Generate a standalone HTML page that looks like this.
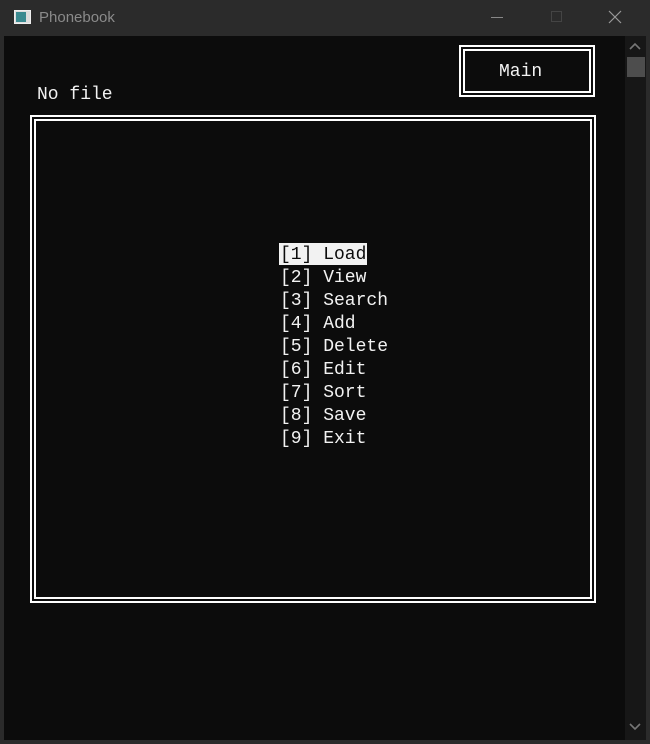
<!DOCTYPE html>
<html><head><meta charset="utf-8"><style>
*{margin:0;padding:0;box-sizing:border-box}
body{width:650px;height:744px;background:#2b2b2b;position:relative;overflow:hidden;font-family:"Liberation Mono",monospace}
.a{position:absolute}
.title{left:0;top:0;width:650px;height:36px;background:#2b2b2b}
.content{left:4px;top:36px;width:621px;height:704px;background:#0c0c0c}
.sb{left:625px;top:36px;width:21px;height:704px;background:#171717}
.thumb{left:627px;top:57px;width:18px;height:20px;background:#4d4d4d}
.edge{left:646px;top:36px;width:4px;height:708px;background:#2b2b2b}
.t{color:#f2f2f2;font-size:18px;line-height:23px;white-space:pre}
.b{border:2px solid #fff}
.b2{border:2px solid #fff}
</style></head><body>
<div class="a title"></div>
<div class="a" style="left:14px;top:10px;width:17px;height:14px;background:#ddd;border:1px solid #eee"><div style="position:absolute;left:1px;top:1px;width:10px;height:10px;background:#3a8a90"></div></div>
<div class="a" style="left:39px;top:9px;font-family:'Liberation Sans',sans-serif;font-size:15px;color:#8a8a8a">Phonebook</div>
<div class="a" style="left:491px;top:17px;width:12px;height:1px;background:#888"></div>
<div class="a" style="left:551px;top:11px;width:11px;height:11px;border:1px solid #444"></div>
<svg class="a" style="left:608px;top:10px" width="14" height="14"><path d="M1 1L13 13M13 1L1 13" stroke="#999" stroke-width="1.2"/></svg>
<div class="a content"></div>
<div class="a sb"></div>
<div class="a thumb"></div>
<svg class="a" style="left:628px;top:42px" width="14" height="10"><path d="M2 7L7 2L12 7" stroke="#777" stroke-width="1.6" fill="none"/></svg>
<svg class="a" style="left:628px;top:722px" width="14" height="10"><path d="M2 2L7 7L12 2" stroke="#777" stroke-width="1.6" fill="none"/></svg>
<div class="a edge"></div>

<div class="a b" style="left:459px;top:45px;width:136px;height:52px"></div>
<div class="a b2" style="left:463px;top:49px;width:128px;height:44px"></div>
<div class="a t" style="left:499px;top:61px">Main</div>
<div class="a t" style="left:37px;top:84px">No file</div>

<div class="a b" style="left:30px;top:115px;width:566px;height:488px"></div>
<div class="a b2" style="left:34px;top:119px;width:558px;height:480px"></div>

<div class="a" style="left:279px;top:243px;width:88px;height:22px;background:#f2f2f2"></div>
<div class="a t" style="left:280px;top:244px;color:#0c0c0c">[1] Load</div>
<div class="a t" style="left:280px;top:267px">[2] View
[3] Search
[4] Add
[5] Delete
[6] Edit
[7] Sort
[8] Save
[9] Exit</div>
</body></html>
